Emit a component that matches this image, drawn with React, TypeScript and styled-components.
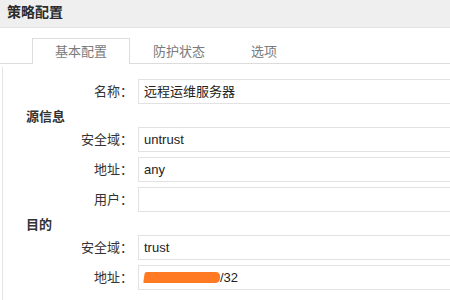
import React from "react";
import styled, { createGlobalStyle } from "styled-components";

const GlobalStyle = createGlobalStyle`
  html, body { margin: 0; padding: 0; background: #ffffff; overflow: hidden; }
  body {
    font-family: "Liberation Sans", "Noto Sans CJK SC", sans-serif;
    color: #333333;
  }
`;

const Page = styled.div`
  width: 450px;
  height: 300px;
  overflow: hidden;
  background: #ffffff;
`;

const Header = styled.div`
  height: 27px;
  border-bottom: 1px solid #e4e4e4;
  background: #efefef;
  display: flex;
  align-items: center;
  padding-left: 7px;
  box-sizing: content-box;
`;

const Title = styled.h1`
  margin: 0 0 4px;
  font-size: 14px;
  font-weight: bold;
  color: #2b2b2b;
  line-height: 18px;
`;

const TabBar = styled.div`
  margin-top: 10px;
  height: 25px;
  padding-left: 32px;
  border-bottom: 1px solid #dcdcdc;
  display: flex;
`;

const Tab = styled.div<{ $active?: boolean }>`
  height: 25px;
  margin-bottom: -1px;
  padding: 1px 22px 0 22px;
  box-sizing: border-box;
  font-size: 13px;
  line-height: 24px;
  color: #7a7a7a;
  border: 1px solid ${(p) => (p.$active ? "#dcdcdc" : "transparent")};
  border-bottom: none;
  height: 26px;
  background: ${(p) => (p.$active ? "#ffffff" : "transparent")};
`;

const Panel = styled.div`
  margin-top: 3px;
  margin-left: 2px;
  border-left: 1px solid #e4e4e4;
  padding-top: 12px;
  height: 240px;
  display: flex;
  flex-direction: column;
`;

const Row = styled.div<{ $gap?: boolean }>`
  display: flex;
  align-items: stretch;
  height: 25px;
  margin-top: ${(p) => (p.$gap ? "5px" : "0")};
`;

const Label = styled.div`
  width: 130px;
  flex: none;
  text-align: right;
  font-size: 13px;
  line-height: 25px;
  color: #333333;
`;

const Field = styled.div`
  margin-left: 5px;
  flex: 1;
  border: 1px solid #e2e2e2;
  border-right: none;
  box-sizing: border-box;
  padding-left: 5px;
  font-size: 13px;
  line-height: 23px;
  color: #222222;
  white-space: nowrap;
  display: flex;
  align-items: center;
`;

const Heading = styled.div`
  height: 23px;
  padding-top: 3px;
  padding-left: 23px;
  box-sizing: border-box;
  font-size: 13px;
  font-weight: bold;
  line-height: 20px;
  color: #333333;
`;

const Redacted = styled.span`
  display: inline-block;
  width: 76px;
  height: 11px;
  background: #ff7a22;
  border-radius: 2px 5px 4px 1px;
  transform: skewX(-8deg);
`;

export default function App() {
  return (
    <Page>
      <GlobalStyle />
      <Header>
        <Title>策略配置</Title>
      </Header>
      <TabBar>
        <Tab $active>基本配置</Tab>
        <Tab>防护状态</Tab>
        <Tab>选项</Tab>
      </TabBar>
      <Panel>
        <Row>
          <Label>名称：</Label>
          <Field>远程运维服务器</Field>
        </Row>
        <Heading>源信息</Heading>
        <Row>
          <Label>安全域：</Label>
          <Field>untrust</Field>
        </Row>
        <Row $gap>
          <Label>地址：</Label>
          <Field>any</Field>
        </Row>
        <Row $gap>
          <Label>用户：</Label>
          <Field />
        </Row>
        <Heading>目的</Heading>
        <Row>
          <Label>安全域：</Label>
          <Field>trust</Field>
        </Row>
        <Row $gap>
          <Label>地址：</Label>
          <Field>
            <Redacted />
            /32
          </Field>
        </Row>
      </Panel>
    </Page>
  );
}
